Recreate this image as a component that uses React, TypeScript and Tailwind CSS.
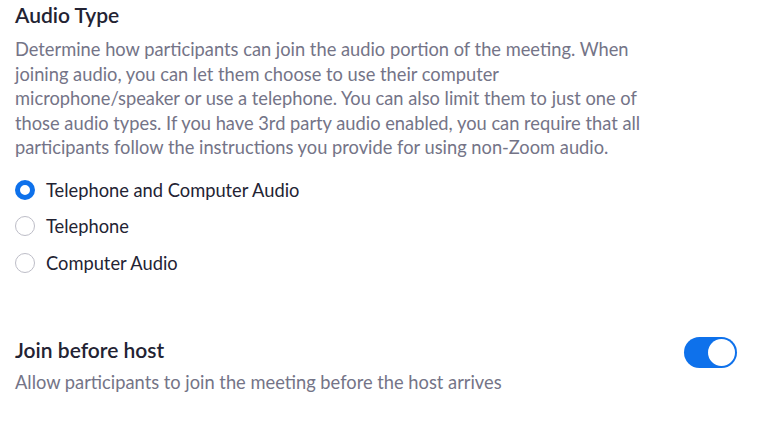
import React from "react";

const options = ["Telephone and Computer Audio", "Telephone", "Computer Audio"];

function Radio({ checked }: { checked: boolean }) {
  return checked ? (
    <span className="box-border inline-block h-[20px] w-[20px] shrink-0 rounded-full border-[5px] border-[#0e71eb] bg-white" />
  ) : (
    <span className="box-border inline-block h-[20px] w-[20px] shrink-0 rounded-full border-[1.5px] border-[#bdbdc7] bg-white" />
  );
}

export default function App() {
  return (
    <div className="h-[435px] w-[768px] bg-white font-['Lato','Noto_Sans',sans-serif] text-[#232333]">
      <div className="px-[15px] pt-[1px]">
        <h2 className="text-[21px] leading-[28px] font-semibold text-[#232333]">Audio Type</h2>
        <p className="mt-[8px] text-[18.3px] leading-[24.5px] text-[#747487]">
          Determine how participants can join the audio portion of the meeting. When
          <br />
          joining audio, you can let them choose to use their computer
          <br />
          microphone/speaker or use a telephone. You can also limit them to just one of
          <br />
          those audio types. If you have 3rd party audio enabled, you can require that all
          <br />
          participants follow the instructions you provide for using non-Zoom audio.
        </p>
        <div className="mt-[18px] flex flex-col gap-[12.5px]">
          {options.map((o, i) => (
            <label key={o} className="flex h-[24px] items-center gap-[11px]">
              <Radio checked={i === 0} />
              <span className="text-[18.3px] leading-[24px] text-[#232333]">{o}</span>
            </label>
          ))}
        </div>
        <div className="mt-[61px] flex items-start justify-between pr-[16px]">
          <div>
            <h3 className="text-[21px] leading-[28px] font-semibold text-[#232333]">Join before host</h3>
            <p className="mt-[6px] text-[18.3px] leading-[24px] text-[#747487]">
              Allow participants to join the meeting before the host arrives
            </p>
          </div>
          <div className="mt-[1px] flex h-[31px] w-[53px] items-center justify-end rounded-full bg-[#0e71eb] p-[2px]">
            <span className="h-[27px] w-[27px] rounded-full bg-white" />
          </div>
        </div>
      </div>
    </div>
  );
}
